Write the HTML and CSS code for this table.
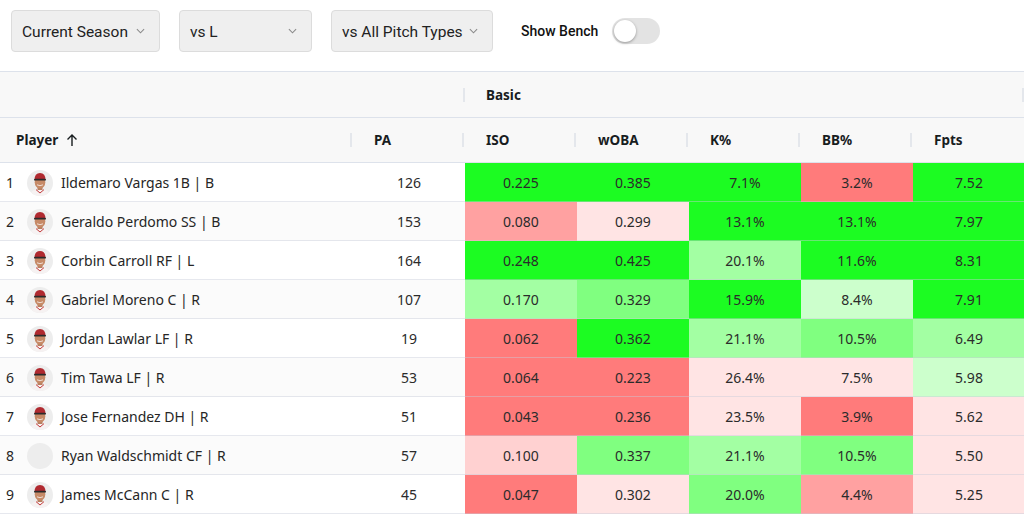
FILE: index.html
```html
<!DOCTYPE html>
<html lang="en">
<head>
<meta charset="utf-8">
<title>Lineup Splits</title>
<link rel="stylesheet" href="styles.css">
</head>
<body>
<svg class="defs" width="0" height="0" aria-hidden="true">
  <defs>
    <clipPath id="avclip"><circle cx="13" cy="13" r="13"/></clipPath>
    <symbol id="face" viewBox="0 0 26 26">
      <circle cx="13" cy="13" r="13" fill="#ededed"/>
      <g clip-path="url(#avclip)">
        <path d="M2 27 Q3 19 13 19 Q23 19 24 27 Z" fill="#f6f2f2"/>
        <path d="M9 19.6 L13 23 L17 19.6" fill="none" stroke="#c23a3a" stroke-width="1"/>
        <rect x="10.5" y="15" width="5" height="5" fill="#b77e5f"/>
        <ellipse cx="13" cy="12.3" rx="5.3" ry="6.3" fill="#c68a67"/>
        <path d="M7.5 10 Q7.5 3 13 3 Q18.5 3 18.5 10 Z" fill="#b02a30"/>
        <rect x="7" y="8.8" width="12" height="1.8" rx="0.9" fill="#2b2b2b"/>
        <path d="M10 14.8 Q13 16.6 16 14.8" fill="none" stroke="#f4e9e2" stroke-width="0.9"/>
      </g>
    </symbol>
  </defs>
</svg>

<div class="toolbar">
  <div class="select w1"><span>Current Season</span><svg class="chev" viewBox="0 0 10 6"><polyline points="1,1 5,5 9,1"/></svg></div>
  <div class="select w2"><span>vs L</span><svg class="chev" viewBox="0 0 10 6"><polyline points="1,1 5,5 9,1"/></svg></div>
  <div class="select w3"><span>vs All Pitch Types</span><svg class="chev" viewBox="0 0 10 6"><polyline points="1,1 5,5 9,1"/></svg></div>
  <div class="bench">
    <span class="bench-label">Show Bench</span>
    <span class="toggle"><span class="knob"></span></span>
  </div>
</div>

<div class="grid">
  <div class="group-row">
    <div class="gcell blank"></div>
    <div class="gcell basic"><span class="sep"></span>Basic<span class="sep end"></span></div>
  </div>
  <div class="head-row">
    <div class="hcell player">Player <svg class="sort" viewBox="0 0 12 14"><path d="M6 13 V2 M1.5 6.5 L6 2 L10.5 6.5"/></svg><span class="sep"></span></div>
    <div class="hcell">PA<span class="sep"></span></div>
    <div class="hcell">ISO<span class="sep"></span></div>
    <div class="hcell">wOBA<span class="sep"></span></div>
    <div class="hcell">K%<span class="sep"></span></div>
    <div class="hcell">BB%<span class="sep"></span></div>
    <div class="hcell">Fpts</div>
  </div>

  <div class="row">
    <div class="cell player"><span class="num">1</span><svg class="av"><use href="#face"/></svg><span>Ildemaro Vargas 1B | B</span></div>
    <div class="cell pa">126</div>
    <div class="cell g1">0.225</div><div class="cell g1">0.385</div><div class="cell g1">7.1%</div><div class="cell r1">3.2%</div><div class="cell g1">7.52</div>
  </div>
  <div class="row alt">
    <div class="cell player"><span class="num">2</span><svg class="av"><use href="#face"/></svg><span>Geraldo Perdomo SS | B</span></div>
    <div class="cell pa">153</div>
    <div class="cell r2">0.080</div><div class="cell r4">0.299</div><div class="cell g1">13.1%</div><div class="cell g1">13.1%</div><div class="cell g1">7.97</div>
  </div>
  <div class="row">
    <div class="cell player"><span class="num">3</span><svg class="av"><use href="#face"/></svg><span>Corbin Carroll RF | L</span></div>
    <div class="cell pa">164</div>
    <div class="cell g1">0.248</div><div class="cell g1">0.425</div><div class="cell g3">20.1%</div><div class="cell g1">11.6%</div><div class="cell g1">8.31</div>
  </div>
  <div class="row alt">
    <div class="cell player"><span class="num">4</span><svg class="av"><use href="#face"/></svg><span>Gabriel Moreno C | R</span></div>
    <div class="cell pa">107</div>
    <div class="cell g3">0.170</div><div class="cell g2">0.329</div><div class="cell g1">15.9%</div><div class="cell g4">8.4%</div><div class="cell g1">7.91</div>
  </div>
  <div class="row">
    <div class="cell player"><span class="num">5</span><svg class="av"><use href="#face"/></svg><span>Jordan Lawlar LF | R</span></div>
    <div class="cell pa">19</div>
    <div class="cell r1">0.062</div><div class="cell g1">0.362</div><div class="cell g3">21.1%</div><div class="cell g2">10.5%</div><div class="cell g3">6.49</div>
  </div>
  <div class="row alt">
    <div class="cell player"><span class="num">6</span><svg class="av"><use href="#face"/></svg><span>Tim Tawa LF | R</span></div>
    <div class="cell pa">53</div>
    <div class="cell r1">0.064</div><div class="cell r1">0.223</div><div class="cell r4">26.4%</div><div class="cell r4">7.5%</div><div class="cell g4">5.98</div>
  </div>
  <div class="row">
    <div class="cell player"><span class="num">7</span><svg class="av"><use href="#face"/></svg><span>Jose Fernandez DH | R</span></div>
    <div class="cell pa">51</div>
    <div class="cell r1">0.043</div><div class="cell r1">0.236</div><div class="cell r4">23.5%</div><div class="cell r1">3.9%</div><div class="cell r4">5.62</div>
  </div>
  <div class="row alt">
    <div class="cell player"><span class="num">8</span><span class="av empty"></span><span>Ryan Waldschmidt CF | R</span></div>
    <div class="cell pa">57</div>
    <div class="cell r3">0.100</div><div class="cell g2">0.337</div><div class="cell g3">21.1%</div><div class="cell g2">10.5%</div><div class="cell r4">5.50</div>
  </div>
  <div class="row">
    <div class="cell player"><span class="num">9</span><svg class="av"><use href="#face"/></svg><span>James McCann C | R</span></div>
    <div class="cell pa">45</div>
    <div class="cell r1">0.047</div><div class="cell r4">0.302</div><div class="cell g2">20.0%</div><div class="cell r2">4.4%</div><div class="cell r4">5.25</div>
  </div>
</div>
</body>
</html>
```

FILE: styles.css
```css
html, body {
  margin: 0;
  padding: 0;
  background: #ffffff;
  overflow: hidden;
}
body {
  width: 1024px;
  height: 514px;
  font-family: "Noto Sans", "Open Sans", sans-serif;
  color: #181d1f;
}
.defs { position: absolute; }

.toolbar {
  display: flex;
  align-items: center;
  gap: 19px;
  padding: 10px 11px 0 11px;
  height: 42px;
}
.select {
  box-sizing: border-box;
  height: 42px;
  display: flex;
  align-items: center;
  justify-content: space-between;
  padding: 2px 14px 0 10px;
  background: #efefef;
  border: 1px solid #dcdcdc;
  border-radius: 4px;
  font-family: Roboto, "Liberation Sans", sans-serif;
  font-size: 15.5px;
  color: #222;
}
.w1 { width: 149px; }
.w2 { width: 133px; }
.w3 { width: 162px; }
.chev { width: 9px; height: 6px; margin-top: -3px; }
.chev polyline { fill: none; stroke: #8a8a8a; stroke-width: 1.2; }

.bench {
  display: flex;
  align-items: center;
  gap: 14px;
  margin-left: 9px;
}
.bench-label {
  font-family: Roboto, "Liberation Sans", sans-serif;
  font-weight: 500;
  font-size: 14px;
  color: #111;
}
.toggle {
  box-sizing: border-box;
  width: 48px;
  height: 26px;
  border-radius: 13px;
  background: #e3e3e3;
  padding: 2px;
  display: flex;
  align-items: center;
}
.knob {
  width: 22px;
  height: 22px;
  border-radius: 50%;
  background: #fff;
  box-shadow: 0 1px 3px rgba(0,0,0,0.35);
}

.grid {
  margin-top: 19px;
  border-top: 1px solid #dde2eb;
  width: 1025px;
}
.group-row, .head-row {
  display: grid;
  grid-template-columns: 465px 560px;
  background: #f8f8f8;
  border-bottom: 1px solid #dde2eb;
  font-weight: 700;
  font-size: 13.5px;
}
.group-row { height: 45px; }
.head-row {
  height: 44px;
  grid-template-columns: 353px 112px 112px 112px 112px 112px 112px;
}
.gcell, .hcell {
  position: relative;
  display: flex;
  align-items: center;
}
.basic { padding-left: 21px; }
.hcell { padding-left: 21px; }
.hcell.player { padding-left: 16px; gap: 8px; }
.sep {
  position: absolute;
  right: 1px;
  top: 50%;
  width: 2px;
  height: 14px;
  margin-top: -7px;
  background: #e4e7ec;
}
.basic .sep { left: -2px; right: auto; }
.basic .sep.end { left: auto; right: 1px; }
.sort { width: 12px; height: 14px; }
.sort path { fill: none; stroke: #181d1f; stroke-width: 1.4; }

.row {
  display: grid;
  grid-template-columns: 353px 112px 112px 112px 112px 112px 112px;
  height: 39px;
  font-size: 14px;
  background: #fff;
}
.row.alt { background: #fbfbfb; }
.cell {
  box-sizing: border-box;
  display: flex;
  align-items: center;
  justify-content: center;
  padding-top: 1px;
  border-bottom: 1px solid rgba(200, 205, 218, 0.45);
  color: #2b2b2b;
}
.cell.player {
  justify-content: flex-start;
  padding-left: 6px;
  color: #262626;
}
.num { width: 21px; }
.av {
  width: 26px;
  height: 26px;
  margin-right: 8px;
  flex: none;
}
.av.empty {
  display: block;
  border-radius: 50%;
  background: #ededed;
}
.cell.pa { justify-content: center; }

.g1 { background: #1cfc22; }
.g2 { background: #80ff80; }
.g3 { background: #a3ffa3; }
.g4 { background: #ccffcc; }
.r1 { background: #ff7b7b; }
.r2 { background: #ffa1a1; }
.r3 { background: #ffd1d1; }
.r4 { background: #ffe4e4; }
```
